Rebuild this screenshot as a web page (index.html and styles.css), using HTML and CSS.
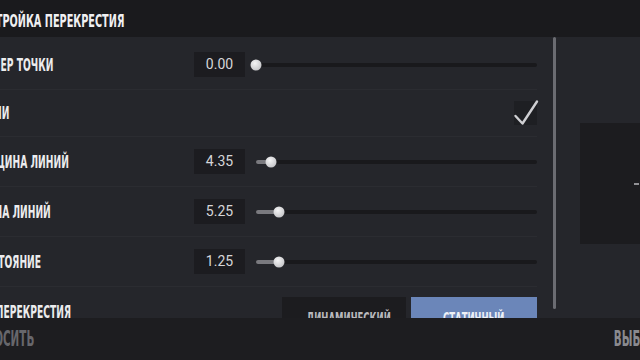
FILE: index.html
```html
<!DOCTYPE html>
<html lang="ru">
<head>
    <meta charset="UTF-8">
    <meta name="viewport" content="width=device-width, initial-scale=1.0">
    <title>Настройка перекрестия</title>
    <link rel="stylesheet" href="styles.css">
</head>
<body>
    <div class="screen">
        <div class="topbar">
            <h1 class="title"><span>НАСТРОЙКА ПЕРЕКРЕСТИЯ</span></h1>
        </div>

        <div class="main">
            <div class="list">
                <div class="row">
                    <div class="label"><span>РАЗМЕР ТОЧКИ</span></div>
                    <div class="value">0.00</div>
                    <div class="slider">
                        <div class="fill" style="width: 0%"></div>
                        <div class="thumb" style="left: 0%"></div>
                    </div>
                </div>

                <div class="row row-short">
                    <div class="label"><span>ЛИНИИ</span></div>
                    <div class="checkbox">
                        <svg viewBox="0 0 24 24" width="24" height="24">
                            <polyline points="1.5,15 8.5,22.5 23,0.5" fill="none" stroke="#cfcfd3" stroke-width="2.4" stroke-linecap="round" stroke-linejoin="round"/>
                        </svg>
                    </div>
                </div>

                <div class="row">
                    <div class="label"><span>ТОЛЩИНА ЛИНИЙ</span></div>
                    <div class="value">4.35</div>
                    <div class="slider">
                        <div class="fill" style="width: 5.2%"></div>
                        <div class="thumb" style="left: 5.2%"></div>
                    </div>
                </div>

                <div class="row">
                    <div class="label"><span>ДЛИНА ЛИНИЙ</span></div>
                    <div class="value">5.25</div>
                    <div class="slider">
                        <div class="fill" style="width: 8.2%"></div>
                        <div class="thumb" style="left: 8.2%"></div>
                    </div>
                </div>

                <div class="row">
                    <div class="label"><span>РАССТОЯНИЕ</span></div>
                    <div class="value">1.25</div>
                    <div class="slider">
                        <div class="fill" style="width: 8.2%"></div>
                        <div class="thumb" style="left: 8.2%"></div>
                    </div>
                </div>

                <div class="row">
                    <div class="label"><span>ТИП ПЕРЕКРЕСТИЯ</span></div>
                    <div class="segment">
                        <button class="seg-btn"><span>ДИНАМИЧЕСКИЙ</span></button>
                        <button class="seg-btn active"><span>СТАТИЧНЫЙ</span></button>
                    </div>
                </div>
            </div>

            <div class="scrollbar"></div>

            <div class="side">
                <div class="preview">
                    <svg class="crosshair" viewBox="0 0 40 40" width="40" height="40">
                        <g stroke="#b9b9be" stroke-width="1.5">
                            <line x1="11" y1="20" x2="16" y2="20"/>
                            <line x1="24" y1="20" x2="29" y2="20"/>
                            <line x1="20" y1="11" x2="20" y2="16"/>
                            <line x1="20" y1="24" x2="20" y2="29"/>
                        </g>
                    </svg>
                </div>
            </div>
        </div>

        <div class="footer">
            <div class="foot-btn"><span>СБРОСИТЬ</span></div>
            <div class="foot-btn foot-right"><span>ВЫБРАТЬ</span></div>
        </div>
    </div>
</body>
</html>
```

FILE: styles.css
```css
/* Global */
body {
    margin: 0;
    background: #25262b;
    overflow: hidden;
    font-family: "Roboto", "Liberation Sans", sans-serif;
}

/* the whole menu is cut by the left edge of the frame */
.screen {
    width: 705px;
    height: 360px;
    margin-left: -29px;
    display: flex;
    flex-direction: column;
}

.title span,
.label span,
.seg-btn span,
.foot-btn span {
    display: inline-block;
    white-space: nowrap;
    font-family: "DejaVu Sans Condensed", "DejaVu Sans", sans-serif;
    font-stretch: condensed;
    font-weight: bold;
}

/* Header */
.topbar {
    height: 37px;
    flex: none;
    background: #1a1a1d;
    display: flex;
    align-items: center;
    padding-top: 3px;
    box-sizing: border-box;
}

.title {
    margin: 0;
    padding-left: 2px;
    font-size: 18px;
    font-weight: bold;
    color: #f0f0f2;
}

.title span {
    transform: scaleX(0.6);
    transform-origin: left center;
}

/* Main area */
.main {
    flex: 1;
    display: flex;
    overflow: hidden;
    background: #25262b;
}

.list {
    width: 566px;
    flex: none;
    padding-top: 3px;
}

.row {
    height: 50px;
    display: flex;
    align-items: center;
    border-bottom: 1px solid #2b2c31;
    box-sizing: border-box;
}

.row-short {
    height: 47px;
}

.label {
    width: 223px;
    flex: none;
    font-size: 17px;
    color: #ececee;
}

.label span {
    transform: scaleX(0.6);
    transform-origin: left center;
}

.value {
    width: 51px;
    height: 25px;
    flex: none;
    background: #1c1c20;
    color: #d6d6d9;
    font-size: 14px;
    line-height: 25px;
    text-align: center;
}

/* Sliders */
.slider {
    flex: 1;
    margin-left: 11px;
    height: 4px;
    position: relative;
    background: #19191c;
    border-radius: 2px;
}

.fill {
    height: 100%;
    background: #7a7a7f;
    border-radius: 2px;
}

.thumb {
    position: absolute;
    top: 50%;
    width: 11px;
    height: 11px;
    border-radius: 50%;
    background: radial-gradient(circle at 40% 35%, #f4f4f5, #c9c9cc 70%, #a8a8ac);
    transform: translate(-50%, -50%);
}

/* Checkbox */
.checkbox {
    margin-left: auto;
    width: 23px;
    height: 24px;
    background: #1e1f23;
}

.checkbox svg {
    display: block;
    overflow: visible;
}

/* Segmented switch */
.segment {
    margin-left: auto;
    align-self: flex-start;
    margin-top: 10px;
    display: flex;
    gap: 5px;
}

.seg-btn {
    width: 124px;
    height: 37px;
    border: none;
    padding: 7px 0 0;
    background: #1c1c1f;
    color: #b9b9bd;
    font-size: 15px;
}

.seg-btn span {
    transform: scaleX(0.63);
}

.seg-btn.active {
    width: 126px;
    background: #6b86b9;
    color: #eef1f7;
}

/* Scrollbar and preview */
.scrollbar {
    width: 3px;
    height: 272px;
    flex: none;
    margin-left: 16px;
    background: #6b6c72;
    border-radius: 2px;
}

.side {
    padding-left: 24px;
    padding-top: 86px;
}

.preview {
    width: 126px;
    height: 121px;
    background: #1c1c1f;
    display: flex;
    align-items: center;
    justify-content: center;
}

/* Footer */
.footer {
    height: 42px;
    flex: none;
    background: #1d1d20;
    display: flex;
    align-items: center;
    justify-content: space-between;
    padding: 0 5px 0 0;
    box-sizing: border-box;
    font-size: 21px;
}

.foot-btn {
    color: #67676c;
}

.foot-btn span {
    transform: scaleX(0.55);
    transform-origin: left center;
}

.foot-right {
    color: #8a8a8f;
}

.foot-right span {
    transform-origin: right center;
}
```
